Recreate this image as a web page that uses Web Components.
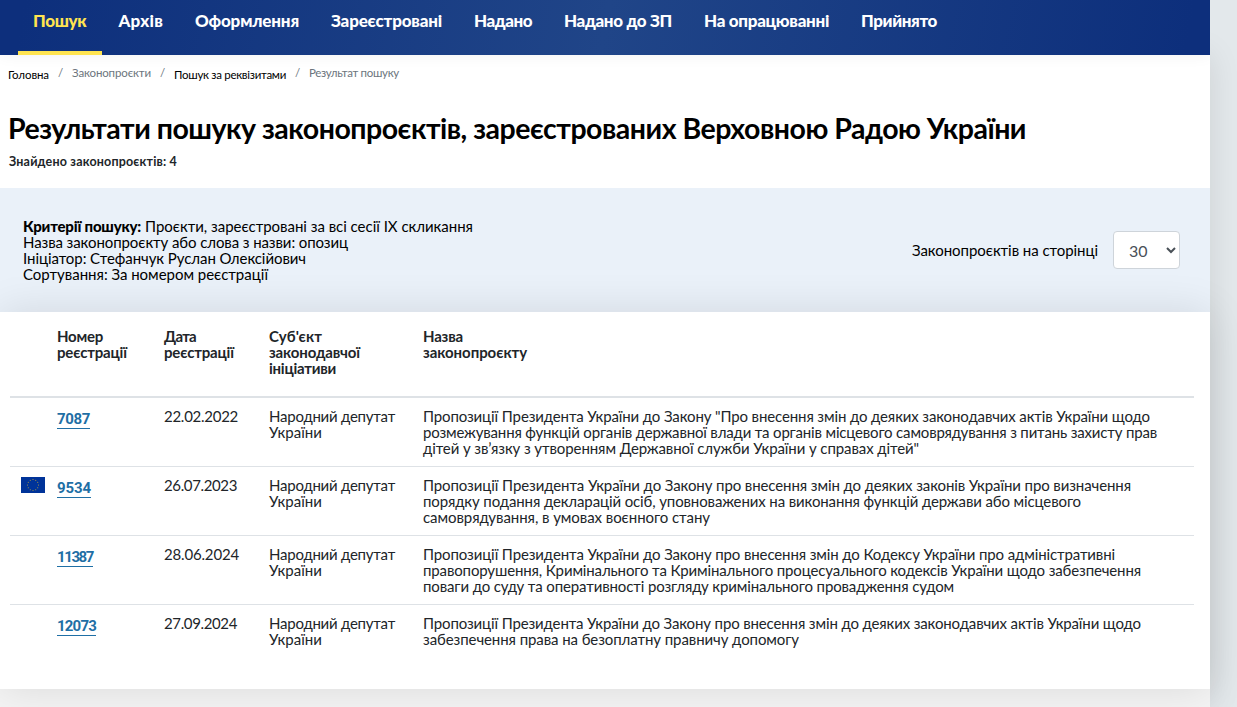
<!DOCTYPE html>
<html lang="uk">
<head>
<meta charset="utf-8">
<title>Результати пошуку законопроєктів</title>
<style>
    html, body { margin: 0; height: 100%; }
    body {
        background: #e3e8eb;
        color: #212529;
        font: 15px/16px Lato, "Open Sans", sans-serif;
        overflow: hidden;
    }
</style>
</head>
<body>
<bills-page>
    <nav-bar slot="nav">
        <nav-item active w="53.5">Пошук</nav-item>
        <nav-item w="44.5">Архів</nav-item>
        <nav-item w="104">Оформлення</nav-item>
        <nav-item w="111">Зареєстровані</nav-item>
        <nav-item w="58">Надано</nav-item>
        <nav-item w="108">Надано до ЗП</nav-item>
        <nav-item w="125">На опрацюванні</nav-item>
        <nav-item w="76">Прийнято</nav-item>
    </nav-bar>
    <page-heading></page-heading>
    <search-criteria></search-criteria>
    <bills-table>
        <bill-row number="7087" nw="33" date="22.02.2022" dw="74">
            <fit-text w="727">Пропозиції Президента України до Закону "Про внесення змін до деяких законодавчих актів України щодо</fit-text>
            <fit-text w="734">розмежування функцій органів державної влади та органів місцевого самоврядування з питань захисту прав</fit-text>
            <fit-text w="496">дітей у зв’язку з утворенням Державної служби України у справах дітей"</fit-text>
        </bill-row>
        <bill-row number="9534" nw="34" date="26.07.2023" dw="73" eu>
            <fit-text w="708">Пропозиції Президента України до Закону про внесення змін до деяких законів України про визначення</fit-text>
            <fit-text w="658">порядку подання декларацій осіб, уповноважених на виконання функцій держави або місцевого</fit-text>
            <fit-text w="287">самоврядування, в умовах воєнного стану</fit-text>
        </bill-row>
        <bill-row number="11387" nw="36" date="28.06.2024" dw="75">
            <fit-text w="692">Пропозиції Президента України до Закону про внесення змін до Кодексу України про адміністративні</fit-text>
            <fit-text w="718">правопорушення, Кримінального та Кримінального процесуального кодексів України щодо забезпечення</fit-text>
            <fit-text w="531">поваги до суду та оперативності розгляду кримінального провадження судом</fit-text>
        </bill-row>
        <bill-row number="12073" nw="39" date="27.09.2024" dw="73">
            <fit-text w="718">Пропозиції Президента України до Закону про внесення змін до деяких законодавчих актів України щодо</fit-text>
            <fit-text w="376">забезпечення права на безоплатну правничу допомогу</fit-text>
        </bill-row>
    </bills-table>
</bills-page>

<script>
/**
 * one line of text, tracked so that it fills the width in its "w" attribute
 */
class FitText extends HTMLElement {
    constructor() {
        super();
        this.attachShadow({mode: 'open'});
    }

    connectedCallback() {
        const width = Number(this.getAttribute('w'));
        this.shadowRoot.innerHTML = `
            <style>
                :host { display: block; white-space: nowrap; width: ${width}px; }
                span { display: inline-block; }
            </style>
            <span><slot></slot></span>
        `;
        const line = this.shadowRoot.querySelector('span');
        const natural = line.getBoundingClientRect().width;
        const count = this.textContent.trim().length;
        if (natural && count > 1) {
            line.style.letterSpacing = `${(width - natural) / count}px`;
        }
    }
}

class BillsPage extends HTMLElement {
    constructor() {
        super();
        this.attachShadow({mode: 'open'}).innerHTML = `
            <style>
                :host { display: flex; flex-direction: column; width: 1210px; height: 707px; }
                main {
                    flex: 1;
                    background: linear-gradient(#fff 600px, #f4f4f4 600px);
                    box-shadow: 0 0 30px rgba(0, 0, 0, .1);
                }
            </style>
            <slot name="nav"></slot>
            <main><slot></slot></main>
        `;
    }
}

class NavBar extends HTMLElement {
    constructor() {
        super();
        this.attachShadow({mode: 'open'}).innerHTML = `
            <style>
                :host {
                    display: block;
                    position: relative;
                    z-index: 1;
                    background: linear-gradient(100deg, #0d2f7c 2%, #204588 50%, #0d2f7c 98%);
                    box-shadow: 0 0 15px rgba(0, 0, 0, .06);
                    clip-path: inset(0 0 -20px 0);
                }
                nav { display: flex; gap: 2px; height: 55px; padding-left: 18px; }
            </style>
            <nav><slot></slot></nav>
        `;
    }
}

class NavItem extends HTMLElement {
    constructor() {
        super();
        this.attachShadow({mode: 'open'});
    }

    connectedCallback() {
        this.shadowRoot.innerHTML = `
            <style>
                :host {
                    display: block;
                    box-sizing: border-box;
                    height: 55px;
                    padding: 11px 15px 0;
                    border-bottom: 4px solid transparent;
                    color: #fff;
                    font-size: 17px;
                    font-weight: 900;
                    line-height: 20px;
                }
                :host([active]) { color: #ffe450; border-color: #ffe450; }
            </style>
            <fit-text w="${this.getAttribute('w')}">${this.textContent}</fit-text>
        `;
    }
}

class PageHeading extends HTMLElement {
    constructor() {
        super();
        this.attachShadow({mode: 'open'}).innerHTML = `
            <style>
                :host { display: block; box-sizing: border-box; height: 133px; padding: 10px 8px 0; }
                ol {
                    display: flex;
                    gap: 9px;
                    margin: 0;
                    padding: 0;
                    list-style: none;
                    font-size: 11.5px;
                    color: #6c757d;
                }
                .link { color: #000; padding-top: 2px; }
                h1 { margin: 25px 0 0; font-size: 28.5px; line-height: 40px; font-weight: 700; color: #000; }
                p { margin: 6px 0 0 1px; font-size: 12.5px; font-weight: 700; }
            </style>
            <ol>
                <li class="link"><fit-text w="41">Головна</fit-text></li>
                <li><fit-text w="5">/</fit-text></li>
                <li><fit-text w="79">Законопроєкти</fit-text></li>
                <li><fit-text w="5">/</fit-text></li>
                <li class="link"><fit-text w="112">Пошук за реквізитами</fit-text></li>
                <li><fit-text w="5">/</fit-text></li>
                <li><fit-text w="90">Результат пошуку</fit-text></li>
            </ol>
            <h1><fit-text w="1018">Результати пошуку законопроєктів, зареєстрованих Верховною Радою України</fit-text></h1>
            <p><fit-text w="168">Знайдено законопроєктів: 4</fit-text></p>
        `;
    }
}

class SearchCriteria extends HTMLElement {
    constructor() {
        super();
        this.attachShadow({mode: 'open'}).innerHTML = `
            <style>
                :host {
                    display: flex;
                    justify-content: space-between;
                    align-items: center;
                    box-sizing: border-box;
                    height: 124px;
                    padding: 0 30px 0 23px;
                    background: #eaf1f9;
                    color: #000;
                }
                .first, label { display: flex; }
                .first { gap: 4px; }
                label { align-items: center; gap: 15px; }
                b { font-weight: 900; }
                select {
                    width: 67px;
                    height: 38px;
                    padding: 6px 2px 6px 11px;
                    border: 1px solid #ced4da;
                    border-radius: 4px;
                    background: #fff;
                    color: #495057;
                    font: 16px Lato, sans-serif;
                }
            </style>
            <div>
                <div class="first">
                    <b><fit-text w="118">Критерії пошуку:</fit-text></b>
                    <fit-text w="328">Проєкти, зареєстровані за всі сесії IX скликання</fit-text>
                </div>
                <fit-text w="325">Назва законопроєкту або слова з назви: опозиц</fit-text>
                <fit-text w="283">Ініціатор: Стефанчук Руслан Олексійович</fit-text>
                <fit-text w="245">Сортування: За номером реєстрації</fit-text>
            </div>
            <label>
                <fit-text w="186">Законопроєктів на сторінці</fit-text>
                <select><option>30</option></select>
            </label>
        `;
    }
}

class BillsTable extends HTMLElement {
    constructor() {
        super();
        this.attachShadow({mode: 'open'}).innerHTML = `
            <style>
                :host {
                    display: block;
                    position: relative;
                    box-sizing: border-box;
                    height: 377px;
                    padding: 0 16px 0 10px;
                    background: #fff;
                    box-shadow: 0 0 40px rgba(0, 0, 0, .11);
                    --columns: 47px 107px 105px 154px 1fr;
                }
                .head {
                    display: grid;
                    grid-template-columns: var(--columns);
                    box-sizing: border-box;
                    height: 86px;
                    padding-top: 16px;
                    border-bottom: 2px solid #dee2e6;
                    font-weight: 700;
                }
            </style>
            <div class="head">
                <div></div>
                <div><fit-text w="46">Номер</fit-text><fit-text w="70">реєстрації</fit-text></div>
                <div><fit-text w="32">Дата</fit-text><fit-text w="70">реєстрації</fit-text></div>
                <div><fit-text w="53">Суб'єкт</fit-text><fit-text w="91">законодавчої</fit-text><fit-text w="67">ініціативи</fit-text></div>
                <div><fit-text w="40">Назва</fit-text><fit-text w="104">законопроєкту</fit-text></div>
            </div>
            <slot></slot>
        `;
    }
}

class BillRow extends HTMLElement {
    constructor() {
        super();
        this.attachShadow({mode: 'open'});
    }

    connectedCallback() {
        this.shadowRoot.innerHTML = `
            <style>
                :host {
                    display: grid;
                    grid-template-columns: var(--columns);
                    align-items: start;
                    box-sizing: border-box;
                    height: 69px;
                    padding-top: 10px;
                    border-bottom: 1px solid #dee2e6;
                }
                :host(:last-of-type) { border-bottom: 0; }
                svg { display: block; margin-left: 11px; }
                a {
                    display: block;
                    width: fit-content;
                    margin-top: 1px;
                    padding-top: 1px;
                    border-bottom: 1px solid #1f6fa5;
                    color: #1f6fa5;
                    font: 700 15px/18px Roboto, sans-serif;
                    text-decoration: none;
                }
            </style>
            <div>${this.hasAttribute('eu') ? this.getFlag() : ''}</div>
            <a href="#"><fit-text w="${this.getAttribute('nw')}">${this.getAttribute('number')}</fit-text></a>
            <fit-text w="${this.getAttribute('dw')}">${this.getAttribute('date')}</fit-text>
            <div><fit-text w="126">Народний депутат</fit-text><fit-text w="53">України</fit-text></div>
            <div><slot></slot></div>
        `;
    }

    // twelve stars on a circle
    getFlag() {
        let stars = '';
        for (let i = 0; i < 12; i++) {
            const angle = i * Math.PI / 6;
            const x = 12 + 5.5 * Math.sin(angle);
            const y = 8 - 5.5 * Math.cos(angle);
            stars += `<circle cx="${x.toFixed(2)}" cy="${y.toFixed(2)}" r=".5"/>`;
        }
        return `<svg width="24" height="16" viewBox="0 0 24 16"><path fill="#039" d="M0 0h24v16H0z"/><g fill="#c9ad35">${stars}</g></svg>`;
    }
}

customElements.define('bills-page', BillsPage);
customElements.define('nav-bar', NavBar);
customElements.define('nav-item', NavItem);
customElements.define('page-heading', PageHeading);
customElements.define('search-criteria', SearchCriteria);
customElements.define('bills-table', BillsTable);
customElements.define('bill-row', BillRow);
// last, so that every line is measured in its final font
customElements.define('fit-text', FitText);
</script>
</body>
</html>
